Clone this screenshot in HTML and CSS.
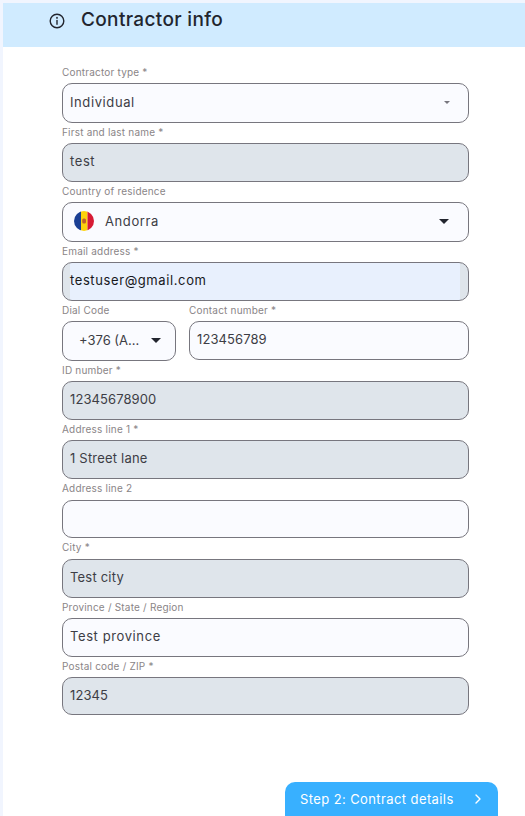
FILE: index.html
```html
<!DOCTYPE html>
<html lang="en">
<head>
    <meta charset="UTF-8">
    <meta name="viewport" content="width=device-width, initial-scale=1.0">
    <title>Contractor info</title>
    <link rel="stylesheet" href="styles.css">
</head>
<body>
    <div class="page">
        <header class="cardHeader">
            <svg class="infoIcon" width="16" height="16" viewBox="0 0 16 16" fill="none" stroke="#22252e" stroke-width="1.4" stroke-linecap="round">
                <circle cx="8" cy="8" r="6.8"/>
                <path d="M8 7.4v3.8"/>
                <path d="M8 4.7v.2" stroke-width="1.7"/>
            </svg>
            <h1>Contractor info</h1>
        </header>
        <form class="form">
            <div class="field">
                <label>Contractor type *</label>
                <div class="box tall">
                    <span class="value">Individual</span>
                    <span class="caret small"></span>
                </div>
            </div>
            <div class="field">
                <label>First and last name *</label>
                <div class="box locked"><span class="value">test</span></div>
            </div>
            <div class="field">
                <label>Country of residence</label>
                <div class="box tall">
                    <svg class="flag" width="20" height="20" viewBox="0 0 20 20">
                        <defs><clipPath id="round"><circle cx="10" cy="10" r="10"/></clipPath></defs>
                        <g clip-path="url(#round)">
                            <rect width="7" height="20" fill="#1b3f94"/>
                            <rect x="7" width="6.5" height="20" fill="#fdd20c"/>
                            <rect x="13.5" width="6.5" height="20" fill="#d71a34"/>
                            <rect x="8.2" y="7.5" width="3.8" height="5" rx="1.5" fill="#c2612a"/>
                        </g>
                    </svg>
                    <span class="value">Andorra</span>
                    <span class="caret"></span>
                </div>
            </div>
            <div class="field">
                <label>Email address *</label>
                <div class="box autofill"><span class="value dark">testuser@gmail.com</span></div>
            </div>
            <div class="row">
                <div class="field dial">
                    <label>Dial Code</label>
                    <div class="box tall">
                        <span class="value dialValue">+376 (A...</span>
                        <span class="caret"></span>
                    </div>
                </div>
                <div class="field grow">
                    <label>Contact number *</label>
                    <div class="box"><span class="value digits">123456789</span></div>
                </div>
            </div>
            <div class="field">
                <label>ID number *</label>
                <div class="box locked"><span class="value digits">12345678900</span></div>
            </div>
            <div class="field">
                <label>Address line 1 *</label>
                <div class="box locked"><span class="value tight">1 Street lane</span></div>
            </div>
            <div class="field">
                <label class="wideLabel">Address line 2</label>
                <div class="box short"></div>
            </div>
            <div class="field">
                <label class="wideLabel">City *</label>
                <div class="box locked"><span class="value tight">Test city</span></div>
            </div>
            <div class="field">
                <label>Province / State / Region</label>
                <div class="box"><span class="value">Test province</span></div>
            </div>
            <div class="field">
                <label>Postal code / ZIP *</label>
                <div class="box locked short"><span class="value digits">12345</span></div>
            </div>
        </form>
        <div class="actions">
            <button type="button" class="nextBtn">
                <span>Step 2: Contract details</span>
                <svg width="8" height="10" viewBox="0 0 8 10" fill="none" stroke="#fff" stroke-width="1.4" stroke-linecap="round" stroke-linejoin="round">
                    <path d="M2 1l4 4-4 4"/>
                </svg>
            </button>
        </div>
    </div>
</body>
</html>
```

FILE: styles.css
```css
* {
    margin: 0;
    padding: 0;
    box-sizing: border-box;
    font-family: "Inter", "Liberation Sans", sans-serif;
}
html, body {
    height: 816px;
    overflow: hidden;
}
body {
    background-color: #f1f5fe;
    padding: 3px 0 0 3px;
}
.page {
    background-color: #fff;
    height: 813px;
    overflow: hidden;
}
.cardHeader {
    display: flex;
    align-items: flex-start;
    height: 44px;
    padding: 8px 0 0 46px;
    background-color: #d0ebff;
}
.infoIcon {
    margin-top: 2px;
}
.cardHeader h1 {
    margin-left: 16px;
    font-size: 19px;
    line-height: 18px;
    font-weight: 500;
    letter-spacing: 0.35px;
    color: #22252e;
}
.form {
    display: flex;
    flex-direction: column;
    gap: 1px;
    width: 407px;
    margin: 17px 0 0 59px;
}
.field {
    display: flex;
    flex-direction: column;
}
.field label {
    height: 19px;
    font-size: 10px;
    line-height: 13px;
    padding-top: 2px;
    letter-spacing: 0.2px;
    color: #8a8587;
}
.field label.wideLabel {
    height: 20px;
}
.box {
    display: flex;
    align-items: center;
    height: 39px;
    padding: 0 7px 3px;
    background-color: #fafbff;
    border: 1px solid #77767e;
    border-radius: 10px;
}
.tall {
    height: 40px;
    padding-bottom: 2px;
}
.short {
    height: 38px;
    padding-bottom: 2px;
}
.locked {
    background-color: #dfe5eb;
}
.autofill {
    background: linear-gradient(to right, #dfe5eb 7px, #e8f0fd 7px, #e8f0fd calc(100% - 8px), #dfe5eb calc(100% - 8px));
}
.value {
    font-size: 13px;
    letter-spacing: 0.6px;
    color: #3d3d45;
}
.dark {
    color: #17181c;
}
.digits {
    letter-spacing: 0.1px;
}
.tight {
    letter-spacing: 0.2px;
}
.caret {
    margin-left: auto;
    margin-right: 12px;
    border-left: 5px solid transparent;
    border-right: 5px solid transparent;
    border-top: 5px solid #22252e;
}
.caret.small {
    margin-right: 11px;
    border-left-width: 3.5px;
    border-right-width: 3.5px;
    border-top: 3.5px solid #77767e;
}
.flag {
    margin: 0 11px 0 4px;
    flex-shrink: 0;
}
.row {
    display: flex;
    gap: 13px;
}
.dial {
    width: 114px;
}
.dialValue {
    margin-left: 9px;
    letter-spacing: 0;
}
.dial .caret {
    margin-right: 7px;
}
.grow {
    flex: 1;
}
.actions {
    display: flex;
    justify-content: flex-end;
    margin: 67px 27px 0 0;
}
.nextBtn {
    display: flex;
    align-items: center;
    justify-content: space-between;
    width: 213px;
    height: 44px;
    padding: 0 16px 10px 15px;
    background-color: #38b0ff;
    color: #fff;
    border: 0;
    border-radius: 10px;
    font-size: 13px;
    font-weight: 400;
    letter-spacing: 0.4px;
}
```
